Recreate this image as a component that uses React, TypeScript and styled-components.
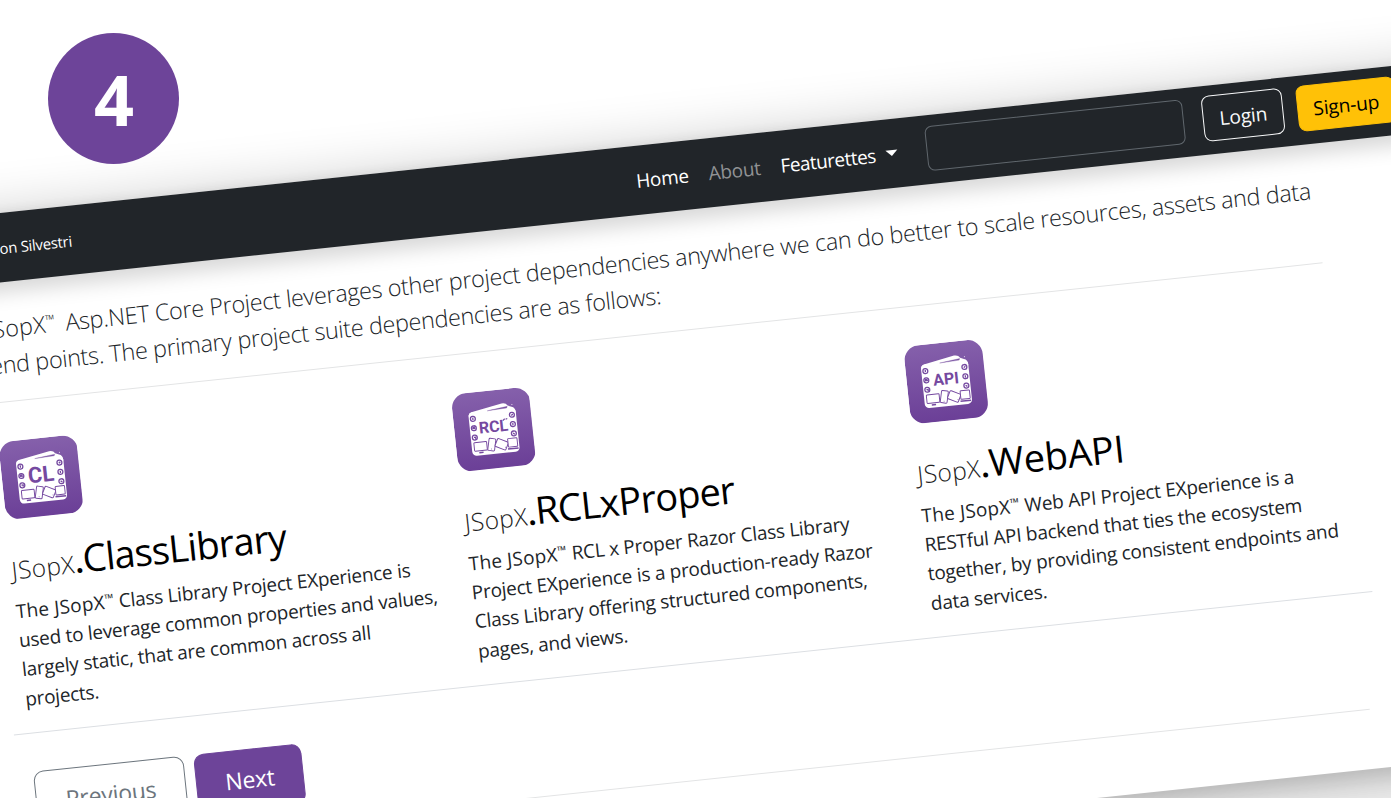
import React from "react";
import styled, { createGlobalStyle } from "styled-components";

const GlobalStyle = createGlobalStyle`
  * { box-sizing: border-box; }
  body { margin: 0; background: #fff; overflow: hidden; }
`;

const purple = "#6d4499";

const Stage = styled.main`
  width: 1391px;
  height: 798px;
  overflow: hidden;
  display: flex;
  flex-direction: column;
  align-items: flex-start;
  font-family: "Open Sans", "Noto Sans", sans-serif;
  font-size: 19px;
  letter-spacing: -0.24px;
  color: #212529;
  white-space: nowrap;
  background: #fff;
`;

const StepBadge = styled.div`
  flex: none;
  width: 131px;
  height: 131px;
  margin: 33px 0 0 48px;
  border-radius: 50%;
  display: flex;
  align-items: center;
  justify-content: center;
  padding: 1px 0 0 1px;
  background: ${purple};
  color: #fff;
  font-weight: 700;
  font-size: 70px;
  line-height: 1;
  letter-spacing: 0;
  position: relative;
  z-index: 1;
`;

const Window = styled.section`
  flex: none;
  width: 1580px;
  height: 697px;
  margin: 49px 0 0 -100px;
  background: #fff;
  transform: rotate(-6.03deg);
  transform-origin: 100px 0;
  box-shadow: 0 0 52px rgba(0, 0, 0, 0.19), 0 10px 20px rgba(0, 0, 0, 0.12), 0 90px 40px 20px rgba(0, 0, 0, 0.08);
`;

const NavBar = styled.nav`
  height: 68.6px;
  display: flex;
  align-items: center;
  background: #212529;
  color: #fff;
  box-shadow: 0 10px 20px rgba(0, 0, 0, 0.16);
`;

const Brand = styled.span`
  width: 168.5px;
  padding-top: 1px;
  text-align: right;
  font-size: 14.9px;
`;

const NavLinks = styled.div`
  display: flex;
  align-items: center;
  gap: 20px;
  margin: 2px 0 0 567.5px;
`;

const NavLink = styled.a<{ $muted?: boolean }>`
  display: flex;
  align-items: center;
  gap: 10px;
  color: ${(p) => (p.$muted ? "#909294" : "#fff")};
`;

const Wide = styled.span`
  letter-spacing: -0.5px;
`;

const Caret = styled.i`
  margin-top: -2px;
  border: 6px solid transparent;
  border-top-color: #fff;
  border-bottom: 0;
`;

const SearchField = styled.div`
  width: 259px;
  height: 45px;
  margin: -2px 0 0 29.5px;
  border: 1px solid #60676d;
  border-radius: 7px;
`;

const NavButton = styled.button<{ $solid?: boolean }>`
  height: 46px;
  padding: 0 15.5px;
  margin: -2px 0 0 ${(p) => (p.$solid ? 13.5 : 19)}px;
  border: 1px solid ${(p) => (p.$solid ? "#ffc107" : "#f8f9fa")};
  border-radius: 8px;
  background: ${(p) => (p.$solid ? "#ffc107" : "transparent")};
  color: ${(p) => (p.$solid ? "#000" : "#f8f9fa")};
  font: 400 19.2px "Open Sans", sans-serif;
  letter-spacing: -0.15px;
`;

const Content = styled.div`
  margin-left: 74px;
  width: 1335.5px;
`;

const Lead = styled.p`
  margin: 0;
  padding-top: 28.3px;
  font-size: 23.4px;
  font-weight: 300;
  line-height: 36.6px;
  letter-spacing: -0.31px;
`;

const Line = styled.span`
  display: block;
`;

const Product = styled.span`
  letter-spacing: 0.2px;
`;

const Mark = styled.span<{ $lift: number; $size: number; $gap: number }>`
  position: relative;
  top: -${(p) => p.$lift}px;
  font-size: ${(p) => p.$size}px;
  line-height: 0;
  letter-spacing: 0;
  margin-right: ${(p) => p.$gap}px;
`;

const Rule = styled.hr`
  height: 0;
  margin: 18px 0 0;
  border: 0;
  border-top: 1.25px solid #e3e4e5;
`;

const Cards = styled.div`
  display: grid;
  grid-template-columns: repeat(3, 1fr);
  margin: 38.8px -15.3px 0;
  padding-bottom: 19px;
  border-bottom: 1px solid #dcdfe3;
`;

const Card = styled.article`
  padding: 0 15.3px;
`;

const Tile = styled.svg`
  display: block;
  width: 78.5px;
  height: 78.5px;
  margin-left: -0.5px;
`;

const Title = styled.h3<{ $tracking: number }>`
  margin: 20.2px 0 9.3px;
  height: 48px;
  line-height: 48px;
  font-size: 38px;
  font-weight: 400;
  letter-spacing: ${(p) => p.$tracking}px;
  color: #000;
`;

const Prefix = styled.small`
  font-size: 24.5px;
  font-weight: 300;
  letter-spacing: 0.35px;
  color: #222;
`;

const Dot = styled.span`
  font-size: 34px;
  font-weight: 600;
`;

const Text = styled.p`
  margin: 0;
  height: 117px;
  line-height: 29.25px;
`;

const Pager = styled.div`
  display: flex;
  gap: 9.5px;
  margin: 38.3px 0 0 -0.5px;
`;

const PageButton = styled.button<{ $primary?: boolean }>`
  height: 59.5px;
  padding: 0 ${(p) => (p.$primary ? 28.5 : 29.5)}px;
  border: 1px solid ${(p) => (p.$primary ? purple : "#6c757d")};
  border-radius: 10px;
  background: ${(p) => (p.$primary ? purple : "transparent")};
  color: ${(p) => (p.$primary ? "#fff" : "#6c757d")};
  font: 400 23px "Open Sans", sans-serif;
  letter-spacing: -0.2px;
`;

function ProjectTile({ label, size, id }: { label: string; size: number; id: string }) {
  return (
    <Tile viewBox="0 0 78 78">
      <defs>
        <linearGradient id={id} x1="0" y1="0" x2="0" y2="1">
          <stop offset="0" stopColor="#8560ab" />
          <stop offset="1" stopColor="#6b3f97" />
        </linearGradient>
      </defs>
      <rect width="78" height="78" rx="15" fill={`url(#${id})`} />
      <g transform="translate(39 39.5) scale(1.06) translate(-39.2 -39.5)">
        <path d="M17.2 24 Q17 21.5 20 20.6 L49 15.4 Q53 15 54.5 18 L58 19.5 Q61.5 20.5 61.5 25 L60 30 L18 30Z" fill="#fff" />
        <rect x="17" y="20.8" width="44.5" height="41" rx="4" fill="#fff" />
        <path d="M35 20.9 L54 18.7 L53.4 20.1Z" fill="#7d56a5" stroke="#7d56a5" strokeWidth="0.3" />
        <circle cx="58.6" cy="17.4" r="0.5" fill="#fff" />
        <g fill="none" stroke="#7549a0" strokeWidth="1.2">
          {[27, 35.8, 44.6].map((y) => (
            <React.Fragment key={y}>
              <circle cx="20.8" cy={y} r="2.3" />
              <circle cx="57.6" cy={y} r="2.3" />
            </React.Fragment>
          ))}
          <path d="M20.8 25.8v2.2M19.3 36h3M19.5 34.9h2.4M20 44.4h1.6v1.5M57 27.6l1.5-1.2M57.6 34.8v2.2M56.9 44.2l1.6 1.2" />
        </g>
        <g fill="#fff" stroke="#7549a0" strokeWidth="0.9">
          <rect x="19.3" y="49.4" width="12" height="8" rx="0.7" />
          <path d="M23.5 59.2h4" strokeWidth="1.4" />
          <rect x="32.7" y="47.2" width="6.4" height="11.4" rx="1" transform="rotate(13 36 53)" />
          <rect x="39.8" y="49.4" width="10.8" height="8" rx="1" transform="rotate(27 45 53.4)" />
          <rect x="51.2" y="48.9" width="8.8" height="8" rx="0.7" />
          <path d="M50.6 58.6h10" strokeWidth="1.4" />
          <path d="M35 56.9h.6M48.4 56.3v.6" />
        </g>
        {label === "RCL" && <path d="M48.5 31.6l2-1.6M51.3 30.6l1.6-.6" stroke="#7549a0" strokeWidth="1.1" />}
        <text
          x="39.3"
          y={36 + size * 0.36}
          textAnchor="middle"
          fontFamily="Roboto, sans-serif"
          fontWeight="700"
          fontSize={size}
          letterSpacing="0"
          fill="#7549a0"
        >
          {label}
        </text>
      </g>
    </Tile>
  );
}

const projects = [
  {
    name: "ClassLibrary",
    label: "CL",
    size: 20.5,
    tracking: -0.85,
    first: "Class Library Project EXperience is",
    rest: ["used to leverage common properties and values,", "largely static, that are common across all", "projects."],
  },
  {
    name: "RCLxProper",
    label: "RCL",
    size: 15,
    tracking: -0.85,
    first: "RCL x Proper Razor Class Library",
    rest: ["Project EXperience is a production-ready Razor", "Class Library offering structured components,", "pages, and views."],
  },
  {
    name: "WebAPI",
    label: "API",
    size: 15,
    tracking: -0.2,
    first: "Web API Project EXperience is a",
    rest: ["RESTful API backend that ties the ecosystem", "together, by providing consistent endpoints and", "data services."],
  },
];

export default function App() {
  return (
    <>
      <GlobalStyle />
      <Stage>
        <StepBadge>4</StepBadge>
        <Window>
          <NavBar>
            <Brand>on Silvestri</Brand>
            <NavLinks>
              <NavLink>Home</NavLink>
              <NavLink $muted>About</NavLink>
              <NavLink>
                <Wide>Featurettes</Wide> <Caret />
              </NavLink>
            </NavLinks>
            <SearchField />
            <NavButton>Login</NavButton>
            <NavButton $solid>Sign-up</NavButton>
          </NavBar>
          <Content>
            <Lead>
              <Line>
                <Product>JSopX</Product>
                <Mark $lift={8} $size={13} $gap={4.5}>™</Mark> Asp.NET Core Project leverages other project dependencies
                anywhere we can do better to scale resources, assets and data
              </Line>
              <Line>end points. The primary project suite dependencies are as follows:</Line>
            </Lead>
            <Rule />
            <Cards>
              {projects.map((p) => (
                <Card key={p.name}>
                  <ProjectTile label={p.label} size={p.size} id={`tile-${p.label}`} />
                  <Title $tracking={p.tracking}>
                    <Prefix>JSopX</Prefix>
                    <Dot>.</Dot>
                    {p.name}
                  </Title>
                  <Text>
                    <Line>
                      <Product>The JSopX</Product>
                      <Mark $lift={6} $size={12} $gap={0.5}>™</Mark> {p.first}
                    </Line>
                    {p.rest.map((line) => (
                      <Line key={line}>{line}</Line>
                    ))}
                  </Text>
                </Card>
              ))}
            </Cards>
            <Pager>
              <PageButton>Previous</PageButton>
              <PageButton $primary>Next</PageButton>
            </Pager>
            <Rule />
          </Content>
        </Window>
      </Stage>
    </>
  );
}
